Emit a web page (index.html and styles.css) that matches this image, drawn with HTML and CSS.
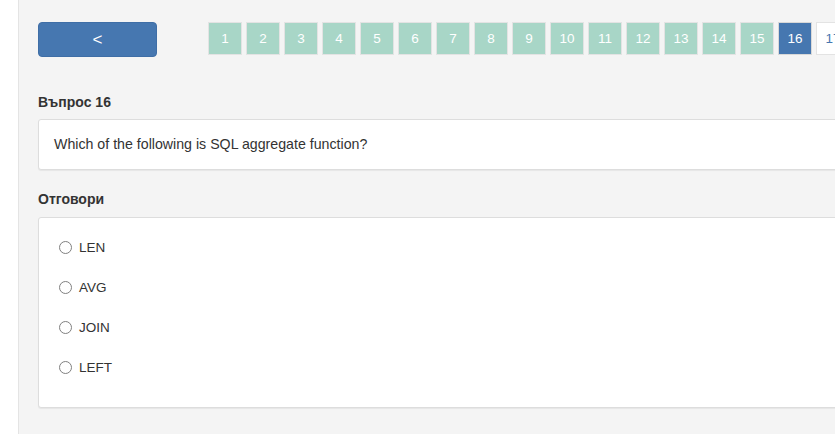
FILE: index.html
```html
<!DOCTYPE html>
<html lang="bg">
<head>
<meta charset="utf-8">
<title>Въпрос 16</title>
<link rel="stylesheet" href="styles.css">
</head>
<body>
<div class="layout">
  <div class="gutter"></div>
  <main class="main">
    <div class="nav">
      <button class="prev" type="button">&lt;</button>
      <ul class="pager">
        <li class="page">1</li>
        <li class="page">2</li>
        <li class="page">3</li>
        <li class="page">4</li>
        <li class="page">5</li>
        <li class="page">6</li>
        <li class="page">7</li>
        <li class="page">8</li>
        <li class="page">9</li>
        <li class="page">10</li>
        <li class="page">11</li>
        <li class="page">12</li>
        <li class="page">13</li>
        <li class="page">14</li>
        <li class="page">15</li>
        <li class="page active">16</li>
        <li class="page todo">17</li>
        <li class="page todo">18</li>
      </ul>
    </div>

    <h2 class="label q-label">Въпрос 16</h2>
    <div class="card question">Which of the following is SQL aggregate function?</div>

    <h2 class="label a-label">Отговори</h2>
    <div class="card answers">
      <label class="answer"><span class="radio"></span><span>LEN</span></label>
      <label class="answer"><span class="radio"></span><span>AVG</span></label>
      <label class="answer"><span class="radio"></span><span>JOIN</span></label>
      <label class="answer"><span class="radio"></span><span>LEFT</span></label>
    </div>
  </main>
</div>
</body>
</html>
```

FILE: styles.css
```css
html, body {
  margin: 0;
  padding: 0;
  overflow: hidden;
  background: #ffffff;
}

body {
  font-family: "Liberation Sans", Arial, Helvetica, sans-serif;
  font-size: 14px;
  color: #333333;
  height: 434px;
}

.layout {
  display: flex;
  height: 434px;
}

.gutter {
  flex: 0 0 18px;
  background: #ffffff;
}

.main {
  flex: 0 0 1000px;
  background: #f4f4f4;
  border-left: 1px solid #e4e4e4;
  padding: 22px 0 0 19px;
  box-sizing: border-box;
}

.nav {
  display: flex;
  align-items: flex-start;
}

.prev {
  width: 119px;
  height: 35px;
  border: 1px solid #3f6ea6;
  border-radius: 4px;
  background: #4677b0;
  color: #ffffff;
  font-family: "Liberation Sans", Arial, sans-serif;
  font-size: 17px;
  padding: 0;
  line-height: 33px;
}

.pager {
  list-style: none;
  margin: 0 0 0 51px;
  padding: 0;
  display: flex;
  gap: 4px;
}

.page {
  width: 34px;
  height: 33px;
  box-sizing: border-box;
  border: 1px solid #e3e3e3;
  background: #a8d6c7;
  color: #ffffff;
  font-size: 13.5px;
  line-height: 31px;
  text-align: center;
}

.page.active {
  background: #4677b0;
  border-color: #d8d8d8;
}

.page.todo {
  background: #ffffff;
  color: #4677b0;
}

.label {
  margin: 0;
  font-size: 14px;
  font-weight: bold;
  line-height: 20px;
  color: #333333;
}

.q-label {
  margin-top: 35px;
  margin-bottom: 7px;
}

.a-label {
  margin-top: 19px;
  margin-bottom: 8px;
}

.card {
  background: #ffffff;
  border: 1px solid #dddddd;
  border-radius: 3px;
  box-shadow: 0 1px 1px rgba(0, 0, 0, 0.06);
}

.question {
  height: 51px;
  box-sizing: border-box;
  padding: 0 15px;
  line-height: 49px;
  font-size: 14.2px;
}

.answers {
  padding: 9px 20px 20px;
  display: flex;
  flex-direction: column;
}

.answer {
  display: flex;
  align-items: center;
  gap: 7px;
  height: 40px;
  font-size: 13.5px;
}

.radio {
  width: 11px;
  height: 11px;
  border: 1px solid #808080;
  border-radius: 50%;
  background: #ffffff;
  flex: 0 0 auto;
}
```
